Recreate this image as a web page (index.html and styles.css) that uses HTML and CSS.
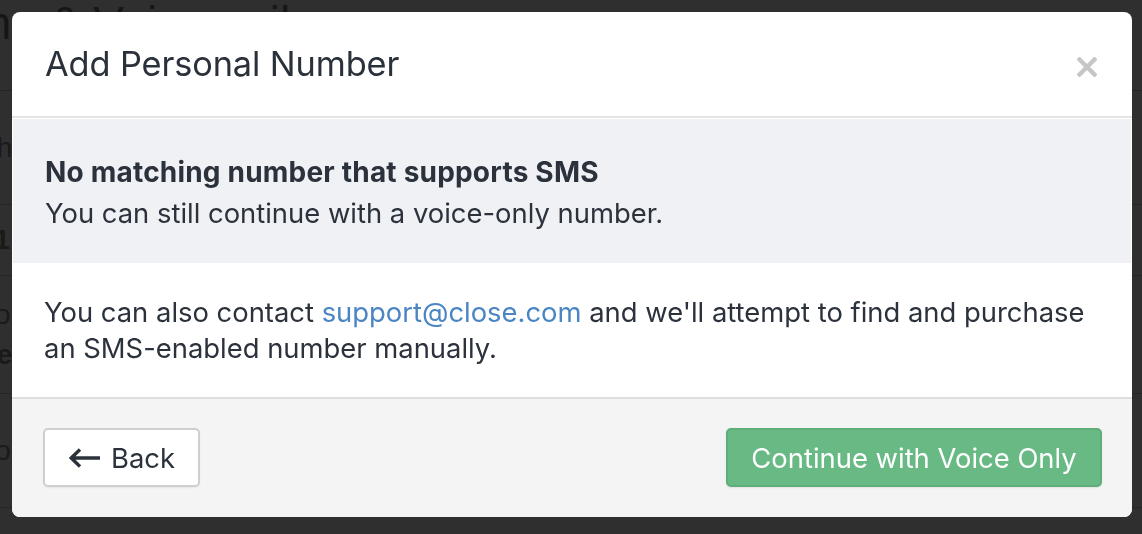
FILE: index.html
```html
<!DOCTYPE html>
<html lang="en">
<head>
<meta charset="utf-8">
<title>Add Personal Number</title>
<link rel="stylesheet" href="styles.css">
</head>
<body>
<div class="page">
  <h1 class="page-title">Phone &amp; Voicemail</h1>
  <div class="rows">
    <div class="row"><span class="cell">Phone name</span></div>
    <div class="row"><span class="cell cell-bold">+1 (512) 555-0142</span></div>
    <div class="row row-tall"><span class="cell">Forwarding from</span><span class="cell cell-bold">Personal phone</span></div>
    <div class="row"><span class="cell">Voicemail</span></div>
  </div>
  <div class="page-actions"><span class="ghost-btn"></span></div>
</div>
<div class="backdrop"></div>
<div class="modal" role="dialog" aria-labelledby="modal-title">
  <div class="modal-header">
    <h2 class="modal-title" id="modal-title">Add Personal Number</h2>
    <button class="close" aria-label="Close">
      <svg width="20" height="20" viewBox="0 0 20 20"><path d="M2.5 2.5 L17.5 17.5 M17.5 2.5 L2.5 17.5" stroke="#c6c6c6" stroke-width="4.4" stroke-linecap="square" fill="none"/></svg>
    </button>
  </div>
  <div class="notice">
    <p class="notice-title">No matching number that supports SMS</p>
    <p class="notice-text">You can still continue with a voice-only number.</p>
  </div>
  <div class="modal-body">
    <p class="body-text">You can also contact <a class="link" href="#">support@close.com</a> and we'll attempt to find and purchase an SMS-enabled number manually.</p>
  </div>
  <div class="modal-footer">
    <button class="btn btn-back">
      <svg class="arrow" width="34" height="22" viewBox="0 0 34 22"><path d="M32 11 H4 M12 2.5 L3.2 11 L12 19.5" stroke="#2b323c" stroke-width="3.4" fill="none" stroke-linecap="butt" stroke-linejoin="miter"/></svg>
      <span>Back</span>
    </button>
    <button class="btn btn-primary">Continue with Voice Only</button>
  </div>
</div>
</body>
</html>
```
FILE: styles.css
```css
* { box-sizing: border-box; }
html, body { margin: 0; padding: 0; }
body {
  width: 1142px;
  height: 534px;
  overflow: hidden;
  background: #ffffff;
  font-family: Inter, "Liberation Sans", Arial, sans-serif;
  position: relative;
}
.page {
  height: 534px;
  overflow: hidden;
  color: #8c8c8c;
  font-family: "Liberation Sans", Arial, sans-serif;
}
.page-title {
  margin: 0 0 0 -96px;
  font-size: 46px;
  font-weight: 400;
  line-height: 46px;
  height: 91px;
  padding-top: 0;
  border-bottom: 1px solid #c8c8c8;
  width: 1300px;
  color: #7a7a7a;
}
.rows { display: flex; flex-direction: column; }
.row {
  height: 114px;
  border-bottom: 1px solid #c8c8c8;
  display: flex;
  flex-direction: column;
  justify-content: center;
  padding-left: 8px;
  margin-left: -30px;
  font-size: 28px;
}
.row:nth-child(2) { height: 71px; }
.row-tall { height: 118px; }
.cell { display: block; line-height: 40px; }
.cell-bold { font-weight: 700; }
.page-actions { padding: 70px 0 0 577px; }
.ghost-btn {
  display: block;
  width: 126px;
  height: 40px;
  border: 2px solid #9a9a9a;
  border-radius: 8px;
}
.backdrop {
  position: fixed;
  inset: 0;
  background: rgba(0, 0, 0, 0.815);
}
.modal {
  position: absolute;
  left: 12px;
  top: 12px;
  width: 1120px;
  height: 505px;
  background: #ffffff;
  border-radius: 8px;
  overflow: hidden;
  display: flex;
  flex-direction: column;
  color: #2b323c;
}
.modal-header {
  height: 106px;
  flex: none;
  display: flex;
  align-items: center;
  justify-content: space-between;
  padding: 0 35px 0 33px;
  border-bottom: 2px solid #e4e4e4;
}
.modal-title {
  margin: 0;
  font-size: 34.3px;
  font-weight: 400;
  line-height: 40px;
  color: #2a313b;
  letter-spacing: -0.1px;
}
.close {
  background: none;
  border: 0;
  padding: 0;
  margin: 6px 0 0 0;
  width: 20px;
  height: 20px;
  display: block;
}
.close svg { display: block; }
.notice {
  flex: none;
  margin: 1px 1px 0;
  background: #f0f1f5;
  padding: 35px 32px 32px;
}
.notice p { margin: 0; font-size: 27.4px; line-height: 36px; }
.notice .notice-title { font-weight: 700; font-size: 28px; letter-spacing: 0.2px; margin-bottom: 5px; }
.modal-body {
  flex: none;
  height: 136px;
  padding: 31px 32px 0;
  border-bottom: 2px solid #dedede;
}
.body-text { margin: 0; font-size: 27.4px; line-height: 36px; }
.link { color: #4a86c4; text-decoration: none; }
.modal-footer {
  flex: 1;
  background: #f4f4f4;
  display: flex;
  justify-content: space-between;
  align-items: flex-start;
  padding: 29px 30px 0 31px;
}
.btn {
  height: 59px;
  border-radius: 5px;
  font-family: inherit;
  font-size: 27.4px;
  display: flex;
  align-items: center;
  cursor: pointer;
}
.btn-back {
  width: 157px;
  background: #ffffff;
  border: 2px solid #cfcfcf;
  color: #2b323c;
  padding: 0 0 0 23px;
  gap: 9px;
  box-shadow: 0 1px 2px rgba(0,0,0,0.06);
}
.arrow { display: block; flex: none; }
.btn-primary {
  width: 376px;
  justify-content: center;
  background: #68b984;
  border: 2px solid #5fae7a;
  color: #ffffff;
  box-shadow: 0 1px 2px rgba(0,0,0,0.08);
}
```
